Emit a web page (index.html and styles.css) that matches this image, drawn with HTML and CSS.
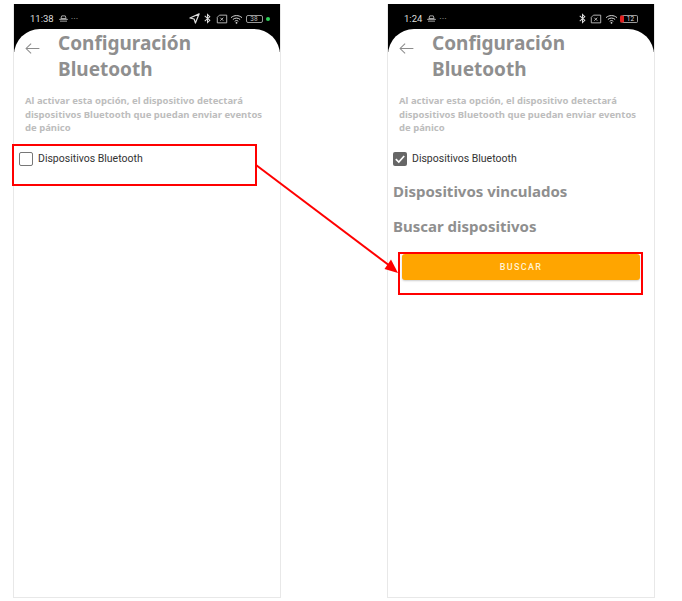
FILE: index.html
```html
<!DOCTYPE html>
<html lang="es">
<head>
  <meta charset="UTF-8" />
  <title>Configuración Bluetooth</title>
  <link rel="stylesheet" href="styles.css">
</head>
<body>

<div class="page">
  <div class="phone">
    <div class="status-bar">
      <div class="status-left">
        <span class="time">11:38</span>
        <svg class="ic-boat" viewBox="0 0 10 8"><path d="M3 1h4l1 3H2zM0 5h10M1 7h8" fill="none" stroke="#bbb" stroke-width="1"/></svg>
        <span class="dots">···</span>
      </div>
      <div class="status-right">
        <svg class="ic" viewBox="0 0 12 12"><path d="M11 1 1 5.5l4.6 1L7 11z" fill="none" stroke="#ddd" stroke-width="1.3" stroke-linejoin="round"/></svg>
        <svg class="ic" viewBox="0 0 12 12"><path d="M3 3.2 8.5 8 6 10.5v-9L8.5 4 3 8.8" fill="none" stroke="#ddd" stroke-width="1.1"/></svg>
        <svg class="ic-sim" viewBox="0 0 14 11"><path d="M4 1h8.5v9h-11V3.500z" fill="none" stroke="#ccc" stroke-width="1"/><path d="M5 4l3.500 3.500M8.500 4 5 7.500" stroke="#ccc"/></svg>
        <svg class="ic-wifi" viewBox="0 0 14 11"><path d="M1 4c3.500-3 8.500-3 12 0M3 6c2.500-2 5.500-2 8 0M5 8c1.300-1 2.700-1 4 0" fill="none" stroke="#ddd" stroke-width="1.100"/><circle cx="7" cy="9.700" r="1" fill="#ddd"/></svg>
        <span class="battery">38</span>
        <span class="green-dot"></span>
      </div>
    </div>
    <div class="card">
      <div class="title-row">
        <svg class="back" viewBox="0 0 16 12"><path d="M15.500 6H1M6.500 .7 1 6l5.500 5.300" fill="none" stroke="#8c8c8c" stroke-width="1.100"/></svg>
        <h1>Configuración Bluetooth</h1>
      </div>
      <p class="desc">Al activar esta opción, el dispositivo detectará dispositivos Bluetooth que puedan enviar eventos de pánico</p>
      <div class="check-row">
        <span class="checkbox"></span>
        <span>Dispositivos Bluetooth</span>
      </div>
    </div>
  </div>

  <div class="phone">
    <div class="status-bar">
      <div class="status-left">
        <span class="time">1:24</span>
        <svg class="ic-boat" viewBox="0 0 10 8"><path d="M3 1h4l1 3H2zM0 5h10M1 7h8" fill="none" stroke="#bbb" stroke-width="1"/></svg>
        <span class="dots">···</span>
      </div>
      <div class="status-right right-two">
        <svg class="ic" viewBox="0 0 12 12"><path d="M3 3.2 8.500 8 6 10.500v-9L8.500 4 3 8.800" fill="none" stroke="#ddd" stroke-width="1.100"/></svg>
        <svg class="ic-sim" viewBox="0 0 14 11"><path d="M4 1h8.500v9h-11V3.500z" fill="none" stroke="#ccc" stroke-width="1"/><path d="M5 4l3.500 3.500M8.500 4 5 7.500" stroke="#ccc"/></svg>
        <svg class="ic-wifi" viewBox="0 0 14 11"><path d="M1 4c3.500-3 8.500-3 12 0M3 6c2.500-2 5.500-2 8 0M5 8c1.300-1 2.700-1 4 0" fill="none" stroke="#ddd" stroke-width="1.100"/><circle cx="7" cy="9.700" r="1" fill="#ddd"/></svg>
        <span class="battery low">12</span>
      </div>
    </div>
    <div class="card">
      <div class="title-row">
        <svg class="back" viewBox="0 0 16 12"><path d="M15.500 6H1M6.500 .7 1 6l5.500 5.300" fill="none" stroke="#8c8c8c" stroke-width="1.100"/></svg>
        <h1>Configuración Bluetooth</h1>
      </div>
      <p class="desc">Al activar esta opción, el dispositivo detectará dispositivos Bluetooth que puedan enviar eventos de pánico</p>
      <div class="check-row">
        <span class="checkbox checked">
          <svg viewBox="0 0 14 14"><path d="M2.800 7.200 5.800 10l5.400-6" fill="none" stroke="#fff" stroke-width="1.700"/></svg>
        </span>
        <span>Dispositivos Bluetooth</span>
      </div>
      <h2 class="section">Dispositivos vinculados</h2>
      <h2 class="section">Buscar dispositivos</h2>
      <button class="search-btn">BUSCAR</button>
    </div>
  </div>
</div>

<!-- red annotations drawn over the screenshots -->
<div class="mark mark-check"></div>
<div class="mark mark-btn"></div>
<svg class="arrow" viewBox="0 0 682 601">
  <path d="M256 165 390 266" stroke="#f00" stroke-width="2" fill="none"/>
  <path d="M398 273 384.500 269 391 259.500z" fill="#f00"/>
</svg>

</body>
</html>
```

FILE: styles.css
```css
* {
  box-sizing: border-box;
}

body {
  margin: 0;
  background-color: #fff;
  font-family: 'Noto Sans', Arial, sans-serif;
}

.page {
  display: flex;
  gap: 106px;
  padding: 4px 0 0 13px;
}

.phone {
  width: 268px;
  height: 594px;
  background: linear-gradient(#000 48px, #fff 48px);
  border: 1px solid #e8e8e8;
  border-top: none;
}

.status-bar {
  height: 25px;
  padding: 0 10px 0 16px;
  display: flex;
  justify-content: space-between;
  align-items: center;
  padding-top: 4px;
  color: #ddd;
  font-family: Roboto, Arial, sans-serif;
  font-size: 9.500px;
}

.status-left,
.status-right {
  display: flex;
  align-items: center;
  gap: 3px;
}

.status-right {
  gap: 2.500px;
}

.right-two {
  padding-right: 6px;
}

.time {
  margin-right: 2px;
}

.dots {
  color: #aaa;
}

.ic {
  width: 11px;
  height: 11px;
}

.ic-boat {
  width: 9px;
  height: 7px;
}

.ic-sim {
  width: 12px;
  height: 10px;
}

.ic-wifi {
  width: 13px;
  height: 10px;
}

.battery {
  width: 17px;
  height: 8px;
  border: 1px solid #999;
  border-radius: 2px;
  font-size: 6.500px;
  line-height: 6px;
  text-align: center;
  color: #bbb;
}

.battery.low {
  width: 18px;
  color: #ddd;
  border-left: 4px solid #e02020;
}

.green-dot {
  width: 4px;
  height: 4px;
  margin-left: 1px;
  border-radius: 50%;
  background-color: #2fd05a;
}

.card {
  height: 568px;
  background-color: #fff;
  border-radius: 26px 26px 0 0;
  padding: 1px 5px 0 5px;
}

.title-row {
  display: flex;
  align-items: flex-start;
}

.back {
  width: 15px;
  height: 11px;
  margin: 13px 18px 0 6px;
  flex: none;
}

h1 {
  margin: 0;
  width: 170px;
  font-size: 19px;
  line-height: 26px;
  font-weight: 700;
  color: #8f8f8f;
}

.desc {
  margin: 12px 0 0 6px;
  width: 240px;
  font-size: 9.500px;
  line-height: 13.500px;
  font-weight: 700;
  color: #bdbdbd;
}

.check-row {
  display: flex;
  align-items: center;
  gap: 5px;
  margin-top: 14px;
  height: 20px;
  font-family: Roboto, Arial, sans-serif;
  font-size: 10.500px;
  color: #333;
}

.checkbox {
  width: 14px;
  height: 14px;
  border: 1.500px solid #777;
  border-radius: 2px;
  display: block;
}

.checkbox.checked {
  background-color: #666;
  border: none;
}

.checkbox svg {
  display: block;
}

.section {
  margin: 9px 0 0 0;
  font-size: 15px;
  line-height: 26px;
  font-weight: 700;
  color: #8f8f8f;
}

.section + .section {
  margin-top: 9px;
}

.search-btn {
  display: block;
  width: 238px;
  height: 26px;
  margin: 15px 0 0 9px;
  background-color: #ffa500;
  border: none;
  border-radius: 3px;
  box-shadow: 0 1px 2px rgba(0,0,0,0.2);
  color: #fff3d6;
  font-family: Roboto, Arial, sans-serif;
  font-size: 9px;
  font-weight: 500;
  letter-spacing: 1.300px;
}

.mark {
  position: absolute;
  border: 2px solid #f00;
}

.mark-check {
  left: 12px;
  top: 144px;
  width: 245px;
  height: 42px;
}

.mark-btn {
  left: 398px;
  top: 252px;
  width: 245px;
  height: 43px;
}

.arrow {
  position: absolute;
  left: 0;
  top: 0;
  width: 682px;
  height: 601px;
}
```
